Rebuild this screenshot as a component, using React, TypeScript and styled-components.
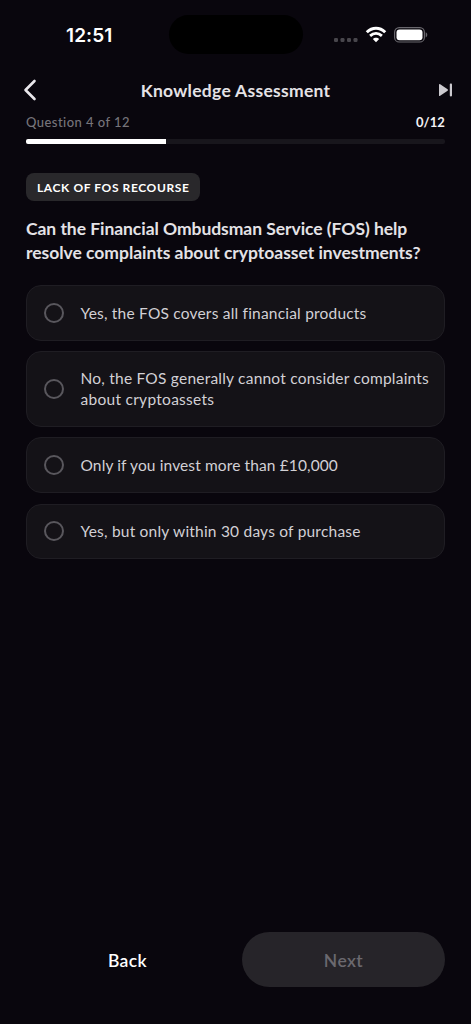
import React from "react";
import styled, { createGlobalStyle } from "styled-components";

const GlobalStyle = createGlobalStyle`
  * { box-sizing: border-box; }
  body { margin: 0; background: #09060d; }
  button { font: inherit; border: 0; padding: 0; background: none; color: inherit; text-align: left; }
`;

const Screen = styled.main`
  display: flex;
  flex-direction: column;
  width: 471px;
  height: 1024px;
  overflow: hidden;
  background: #09060d;
  color: #e4e2e6;
  font-family: Lato, "Liberation Sans", sans-serif;
`;

const StatusBar = styled.div`
  display: grid;
  grid-template-columns: 169px 134px 1fr;
  align-items: center;
  height: 39px;
  margin-top: 15px;
`;

const Clock = styled.time`
  padding: 2px 0 0 66px;
  font: 600 19px/24px Inter, sans-serif;
  letter-spacing: 0.1px;
  color: #fff;
`;

const Island = styled.div`
  height: 39px;
  border-radius: 20px;
  background: #000;
`;

const StatusIcons = styled.div`
  display: flex;
  padding-left: 30px;
  svg { display: block; }
`;

const Header = styled.header`
  display: grid;
  grid-template-columns: 60px 1fr 60px;
  grid-template-rows: 24px;
  align-items: center;
  height: 24px;
  margin-top: 24px;
`;

const IconButton = styled.button<{ $side: "left" | "right" }>`
  display: flex;
  justify-content: ${(p) => (p.$side === "left" ? "flex-start" : "flex-end")};
  padding-left: ${(p) => (p.$side === "left" ? "23px" : "0")};
  padding-right: ${(p) => (p.$side === "right" ? "18px" : "0")};
`;

const Title = styled.h1`
  margin: 0;
  padding-top: 2px;
  font-size: 17.5px;
  line-height: 24px;
  font-weight: 700;
  letter-spacing: 0.28px;
  text-align: center;
  white-space: nowrap;
`;

const Content = styled.section`
  display: flex;
  flex-direction: column;
  align-items: stretch;
  padding: 0 26px;
`;

const ProgressRow = styled.div`
  display: flex;
  justify-content: space-between;
  margin-top: 12px;
  height: 16px;
  font-size: 13px;
  line-height: 16px;
`;

const Position = styled.span`
  color: #76747a;
  font-weight: 500;
  letter-spacing: 0.45px;
`;

const Score = styled.span`
  color: #f3f2f5;
  font-weight: 700;
  letter-spacing: 0.1px;
`;

const Track = styled.div`
  height: 5px;
  margin-top: 9px;
  border-radius: 2px;
  overflow: hidden;
  background: #18161c;
`;

const Fill = styled.div`
  width: 33.3333%;
  height: 100%;
  background: #fff;
`;

const Badge = styled.span`
  align-self: flex-start;
  width: 174px;
  height: 28px;
  margin-top: 29px;
  padding: 1px 0 0 11px;
  border-radius: 8px;
  background: #29282b;
  color: #fff;
  font-size: 12px;
  line-height: 28px;
  font-weight: 700;
  letter-spacing: 0.6px;
  white-space: nowrap;
`;

const QuestionText = styled.h2`
  margin: 16px 0 0;
  font-size: 17.5px;
  line-height: 24px;
  font-weight: 700;
  white-space: nowrap;
`;

const Line = styled.span<{ $spacing: number }>`
  display: block;
  letter-spacing: ${(p) => p.$spacing}px;
  white-space: nowrap;
`;

const Options = styled.div`
  display: flex;
  flex-direction: column;
  gap: 10.6px;
  margin-top: 20px;
`;

const Option = styled.button<{ $tall?: boolean }>`
  display: flex;
  align-items: center;
  height: ${(p) => (p.$tall ? 75.6 : 55.6)}px;
  padding-left: 17px;
  border: 1px solid #1f1d23;
  border-radius: 15px;
  background: #141217;
  color: #d2d0d5;
  font-size: 15.5px;
  line-height: 21px;
`;

const OptionText = styled.span`
  padding-top: 0.8px;
`;

const Radio = styled.span`
  flex: none;
  width: 20px;
  height: 20px;
  margin-right: 16.5px;
  border: 2px solid #59575d;
  border-radius: 50%;
`;

const Footer = styled.footer`
  display: grid;
  grid-template-columns: 203px 203px;
  gap: 13px;
  margin: auto 26px 37px;
`;

const Action = styled.button<{ $disabled?: boolean }>`
  height: 55px;
  padding-top: 2px;
  border-radius: 28px;
  background: ${(p) => (p.$disabled ? "#262429" : "transparent")};
  color: ${(p) => (p.$disabled ? "#6b696f" : "#fff")};
  font-size: 17.5px;
  line-height: 24px;
  font-weight: 600;
  letter-spacing: 0.4px;
  text-align: center;
`;

const options: { text: string; spacing: number }[][] = [
  [{ text: "Yes, the FOS covers all financial products", spacing: 0.2 }],
  [
    { text: "No, the FOS generally cannot consider complaints", spacing: 0.22 },
    { text: "about cryptoassets", spacing: 0.28 },
  ],
  [{ text: "Only if you invest more than £10,000", spacing: 0.12 }],
  [{ text: "Yes, but only within 30 days of purchase", spacing: 0.21 }],
];

export default function App() {
  return (
    <Screen>
      <GlobalStyle />
      <StatusBar>
        <Clock>12:51</Clock>
        <Island />
        <StatusIcons>
          <svg width="98" height="20" viewBox="0 0 98 20" fill="none">
            <g fill="#48464c">
              <rect x="1" y="13" width="4" height="4" rx="1.2" />
              <rect x="7.5" y="13" width="4" height="4" rx="1.2" />
              <rect x="14" y="13" width="4" height="4" rx="1.2" />
              <rect x="20.5" y="13" width="4" height="4" rx="1.2" />
            </g>
            <path d="M33.8 7.2C39.2 1.9 46.8 1.9 52.2 7.2" stroke="#fff" strokeWidth="3" />
            <path d="M37.1 10.9C40.6 7.7 45.4 7.7 48.9 10.9" stroke="#fff" strokeWidth="2.8" />
            <path d="M43 17.2L39.8 14C41.5 12.3 44.5 12.3 46.2 14Z" fill="#fff" />
            <rect x="61.6" y="2.6" width="29.8" height="14.4" rx="4.6" stroke="#69676d" strokeWidth="1.2" />
            <rect x="63.5" y="4.4" width="26" height="10.8" rx="3" fill="#fff" />
            <path d="M92.7 7.3C94.8 8 94.8 11.7 92.7 12.4Z" fill="#69676d" />
          </svg>
        </StatusIcons>
      </StatusBar>
      <Header>
        <IconButton $side="left" aria-label="Go back">
          <svg width="14" height="22" viewBox="0 0 14 22" fill="none">
            <path d="M11.5 2L2.5 11L11.5 20" stroke="#e9e7eb" strokeWidth="2.6" strokeLinecap="round" strokeLinejoin="round" />
          </svg>
        </IconButton>
        <Title>Knowledge Assessment</Title>
        <IconButton $side="right" aria-label="Skip">
          <svg width="16" height="14" viewBox="0 0 16 14">
            <path d="M2 1.4V12.6Q2 13.4 2.8 12.9L10.6 7.7Q11.4 7 10.6 6.3L2.8 1.1Q2 .6 2 1.4Z" fill="#cccacf" />
            <rect x="12.8" y=".6" width="2.2" height="12.8" rx=".8" fill="#cccacf" />
          </svg>
        </IconButton>
      </Header>
      <Content>
        <ProgressRow>
          <Position>Question 4 of 12</Position>
          <Score>0/12</Score>
        </ProgressRow>
        <Track><Fill /></Track>
        <Badge>LACK OF FOS RECOURSE</Badge>
        <QuestionText>
          <Line $spacing={-0.05}>Can the Financial Ombudsman Service (FOS) help</Line>
          <Line $spacing={-0.025}>resolve complaints about cryptoasset investments?</Line>
        </QuestionText>
        <Options>
          {options.map((lines) => (
            <Option key={lines[0].text} $tall={lines.length > 1}>
              <Radio />
              <OptionText>
                {lines.map((l) => (
                  <Line key={l.text} $spacing={l.spacing}>{l.text}</Line>
                ))}
              </OptionText>
            </Option>
          ))}
        </Options>
      </Content>
      <Footer>
        <Action>Back</Action>
        <Action $disabled>Next</Action>
      </Footer>
    </Screen>
  );
}
